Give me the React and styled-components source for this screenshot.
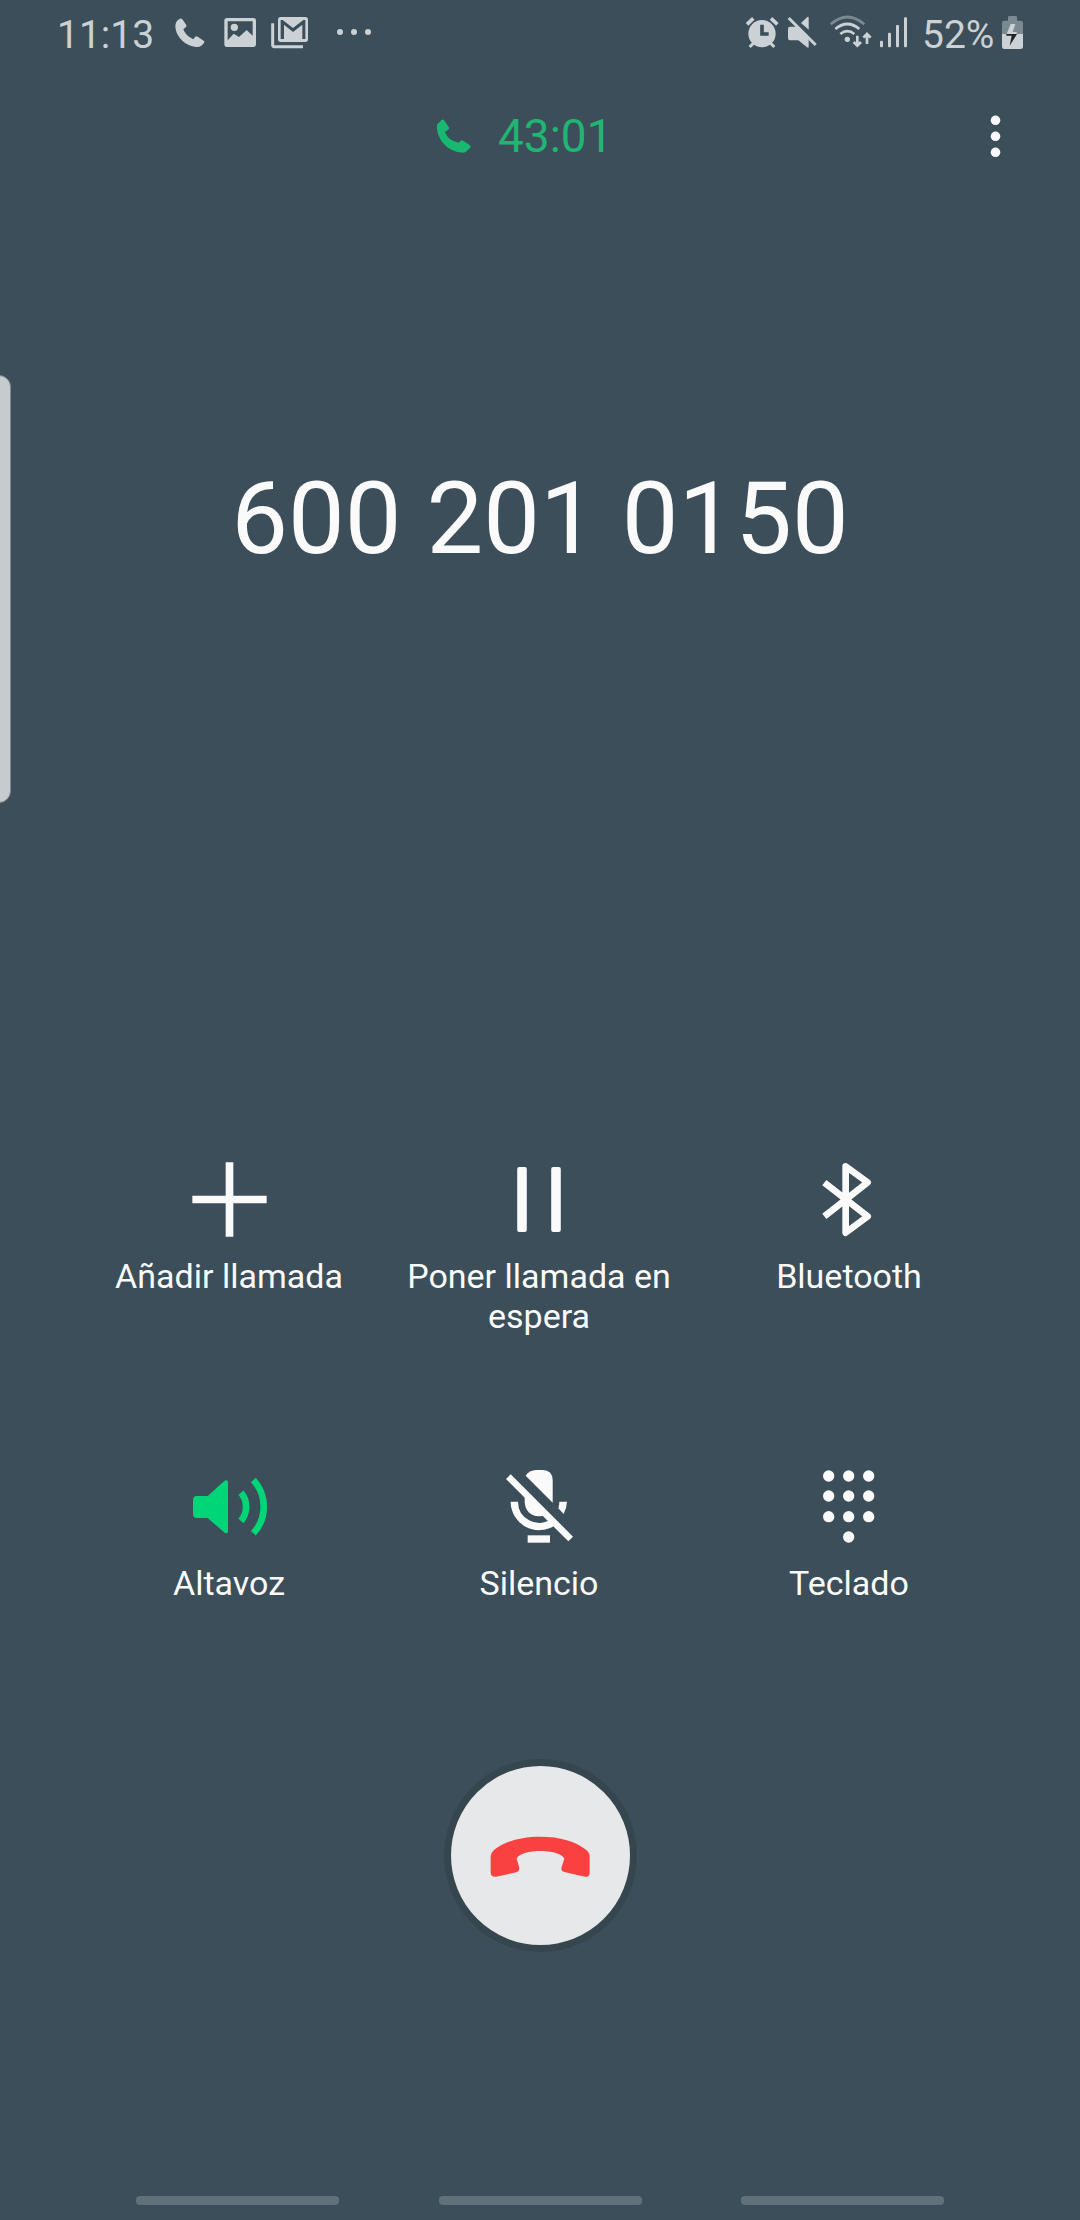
import React from 'react';
import styled, { createGlobalStyle } from 'styled-components';

const BG = '#3b4e59';
const STATUS = '#cbd1d5';
const DIM = '#7b8991';
const WHITE = '#fafafa';
const GREEN = '#00d678';

const PhoneStatusIcon = () => (
    <StatusIcon width="32" viewBox="402 42 96 108">
        <path d="M413 61 L420 56 Q425 54 428 59 L439 75 Q441 79 437 82 L430 88 Q437 108 460 118 L465 111 Q468 107 473 110 L491 122 Q495 125 492 129 L484 137 Q478 142 468 141 C430 137 405 104 406 76 Q406 66 413 61Z" />
    </StatusIcon>
);

const PictureIcon = () => (
    <StatusIcon width="36" viewBox="546 42 108 108">
        <path
            fillRule="evenodd"
            d="M561 54 H640 Q648 54 648 62 V133 Q648 141 640 141 H561 Q553 141 553 133 V62 Q553 54 561 54Z M563 64 V121 L581 101 L597 111 L620 90 L638 107 V64Z"
        />
        <circle cx="583" cy="82" r="11" />
    </StatusIcon>
);

const MailIcon = () => (
    <StatusIcon width="40" viewBox="690 42 120 108">
        <rect x="714" y="51" width="90" height="75" rx="8" />
        <path fill={BG} d="M722 117 V60 H728 L759 84 L790 60 H796 V117 H787 V74 L759 96 L732 74 V117Z" />
        <path fill="none" stroke={STATUS} strokeWidth="9" d="M698 70 V135 Q698 140 703 140 H789" />
    </StatusIcon>
);

const DotsIcon = () => (
    <StatusIcon width="40" viewBox="882 42 120 108">
        <circle cx="900" cy="96" r="9" />
        <circle cx="942" cy="96" r="9" />
        <circle cx="984" cy="96" r="9" />
    </StatusIcon>
);

const AlarmIcon = () => (
    <StatusIcon width="36" viewBox="42 42 108 108">
        <circle cx="96" cy="101" r="41" />
        <path fill="none" stroke={STATUS} strokeWidth="11" d="M51 73 L70 55 M123 55 L142 73" />
        <path fill="none" stroke={STATUS} strokeWidth="9" d="M59 141 L72 128 M120 128 L133 141" />
        <path fill="none" stroke={BG} strokeWidth="11" d="M96 74 V102 H116" />
    </StatusIcon>
);

const MutedIcon = () => (
    <StatusIcon width="32" viewBox="168 42 96 108">
        <path d="M213 69 L232 51 Q236 49 236 54 V89Z" />
        <path d="M180 80 H200 L236 116 V140 Q236 145 231 142 L205 121 H180 Q174 121 174 115 V86 Q174 80 180 80Z" />
        <path fill="none" stroke={STATUS} strokeWidth="9" d="M176 54 L257 135" />
    </StatusIcon>
);

const WifiIcon = () => (
    <StatusIcon width="44" viewBox="294 42 132 108">
        <circle cx="352" cy="118" r="8" />
        <g fill="none" stroke={STATUS} strokeWidth="8">
            <path stroke={DIM} d="M302 73 Q352 29 403 73" />
            <path d="M316 87 Q352 57 388 87" />
            <path d="M331 102 Q352 85 373 102" />
            <path strokeWidth="8" d="M382 107 V137 M371 126 L382 137 L393 126" />
            <path strokeWidth="8" d="M411 132 V102 M400 113 L411 102 L422 113" />
        </g>
    </StatusIcon>
);

const SignalIcon = () => (
    <StatusIcon width="30" viewBox="444 42 90 108">
        <rect x="450" y="122" width="9" height="20" rx="3" />
        <rect x="474" y="98" width="9" height="44" rx="3" />
        <rect x="498" y="75" width="9" height="67" rx="3" />
        <rect x="522" y="52" width="9" height="90" rx="3" />
    </StatusIcon>
);

const BatteryIcon = () => (
    <StatusIcon width="22" viewBox="816 42 66 108">
        <path fill={DIM} d="M834 62 V52 Q834 48 838 48 H857 Q861 48 861 52 V62 H873 Q879 62 879 69 V102 H816 V69 Q816 62 822 62Z" />
        <path d="M816 102 H879 V140 Q879 147 872 147 H823 Q816 147 816 140Z" />
        <path d="M842 72 H856 L848 96 H860 V102 H830Z" />
        <path fill="#1d2327" d="M829 102 H861 L839 137 L845 107 H829Z" />
    </StatusIcon>
);

const CallIcon = () => (
    <svg width="36" height="36" fill="#18b870">
        <path d="M5.6 2 Q7 .8 8 2 L13 9.6 Q13.5 11 12.2 11.8 L9 14 Q11.8 22.4 22.8 24.8 L24.6 22.8 Q25.6 22 26.8 22.6 L34 27.2 Q35 28 34.4 29.4 L30 33.8 Q28.4 35 26.5 34.8 C10 33 1 21 .9 8 Q.9 6.6 2 5.6Z" />
    </svg>
);

const AddIcon = () => (
    <ActionIcon viewBox="267 57 240 240">
        <path d="M377 67 H400 V167 H500 V190 H400 V290 H377 V190 H277 V167 H377Z" />
    </ActionIcon>
);

const HoldIcon = () => (
    <ActionIcon viewBox="0 0 80 80">
        <rect x="18.2" y="8" width="9.6" height="65" rx="2" />
        <rect x="52.2" y="8" width="9.6" height="65" rx="2" />
    </ActionIcon>
);

const BluetoothIcon = () => (
    <ActionIcon viewBox="807 57 240 240">
        <path
            fill="none"
            stroke={WHITE}
            strokeWidth="20"
            strokeLinejoin="round"
            d="M853 128 L983 229 L917 278 V79 L983 127 L853 229"
        />
    </ActionIcon>
);

const SpeakerIcon = () => (
    <ActionIcon viewBox="267 78 240 240" fill={GREEN}>
        <path d="M290 168 H323 L374 122 Q384 118 384 128 V273 Q384 283 374 278 L323 234 H290 Q279 234 279 223 V179 Q279 168 290 168Z" />
        <path fill="none" stroke={GREEN} strokeWidth="20" d="M423 158 A66 66 0 0 1 423 243 M460 120 A118 118 0 0 1 460 280" />
    </ActionIcon>
);

const MicOffIcon = () => (
    <ActionIcon viewBox="117 78 240 240">
        <path d="M197 107 Q208 91 228 90 H248 Q278 92 278 120 V188Z" />
        <path d="M194 158 V186 C195 212 213 229 236 229 Q244 229 249 227 L262 240 L275 232Z" />
        <path d="M298 185 H321 Q320 205 311 222 L295 205 Q298 196 298 185Z" />
        <rect x="203" y="286" width="67" height="22" />
        <path fill="none" stroke={WHITE} strokeWidth="22" d="M163 185 A74 74 0 0 0 278 247" />
        <path fill="none" stroke={WHITE} strokeWidth="20" d="M145 110 L332 297" />
    </ActionIcon>
);

const keys = [
    [206, 108], [266, 108], [326, 108],
    [206, 168], [266, 168], [326, 168],
    [206, 230], [266, 230], [326, 230],
    [266, 291],
];

const KeypadIcon = () => (
    <ActionIcon viewBox="147 78 240 240">
        {keys.map(([x, y]) => <circle key={`${x}-${y}`} cx={x} cy={y} r="17" />)}
    </ActionIcon>
);

const actions = [
    { label: 'Añadir llamada', Icon: AddIcon },
    { label: 'Poner llamada en espera', Icon: HoldIcon },
    { label: 'Bluetooth', Icon: BluetoothIcon },
    { label: 'Altavoz', Icon: SpeakerIcon },
    { label: 'Silencio', Icon: MicOffIcon },
    { label: 'Teclado', Icon: KeypadIcon },
];

const App = () => (
    <Screen>
        <GlobalStyle />
        <StatusBar>
            <Clock>11:13</Clock>
            <StatusGroup>
                <PhoneStatusIcon />
                <Space $size={16} />
                <PictureIcon />
                <Space $size={12} />
                <MailIcon />
                <Space $size={24} />
                <DotsIcon />
            </StatusGroup>
            <StatusGroup $right>
                <AlarmIcon />
                <Space $size={6} />
                <MutedIcon />
                <Space $size={10} />
                <WifiIcon />
                <Space $size={6} />
                <SignalIcon />
                <Percent>52%</Percent>
                <BatteryIcon />
            </StatusGroup>
        </StatusBar>

        <CallBar>
            <CallIcon />
            <Timer>43:01</Timer>
            <MoreButton aria-label="Más opciones">
                <svg width="24" height="48" fill={WHITE}>
                    <circle cx="11.5" cy="8.3" r="4.8" />
                    <circle cx="11.5" cy="24.3" r="4.8" />
                    <circle cx="11.5" cy="40.3" r="4.8" />
                </svg>
            </MoreButton>
        </CallBar>

        <PhoneNumber>600 201 0150</PhoneNumber>

        <Actions>
            {actions.map(({ label, Icon }) => (
                <Action key={label}>
                    <Icon />
                    <ActionLabel>{label}</ActionLabel>
                </Action>
            ))}
        </Actions>

        <HangUp aria-label="Finalizar">
            <svg width="110" height="44" viewBox="164 280 330 132" fill="#f94141">
                <path d="M181 347 Q182 336 191 328 C225 302 270 288 330 288 C390 288 435 302 468 328 Q478 336 478 347 V396 Q478 410 464 408 L402 394 Q392 391 393 382 L402 354 C395 338 360 331 330 331 C300 331 265 338 259 354 L267 382 Q268 391 258 395 L197 408 Q181 409 181 396Z" />
            </svg>
        </HangUp>

        <NavBar>
            <NavHandle />
            <NavHandle />
            <NavHandle />
        </NavBar>
        <EdgeHandle />
    </Screen>
);

export default App;

const GlobalStyle = createGlobalStyle`
    body {
        margin: 0;
        background: ${BG};
    }
`;

const Screen = styled.div`
    position: relative;
    display: flex;
    flex-direction: column;
    width: 1080px;
    height: 2220px;
    background: ${BG};
    color: ${WHITE};
    font-family: Roboto, 'Liberation Sans', sans-serif;
    overflow: hidden;
`;

const StatusBar = styled.div`
    display: flex;
    align-items: center;
    height: 64px;
    padding: 0 56px 0 57px;
    color: ${STATUS};
    font-size: 39px;
    line-height: 64px;
`;

const Clock = styled.div`
    width: 117px;
    padding-top: 6px;
`;

const StatusGroup = styled.div`
    display: flex;
    align-items: center;
    margin-left: ${(props) => (props.$right ? 'auto' : '0')};
`;

const StatusIcon = styled.svg`
    flex: none;
    height: 36px;
    fill: ${STATUS};
`;

const Space = styled.div`
    width: ${(props) => props.$size}px;
`;

const Percent = styled.div`
    width: 80px;
    padding: 6px 0 0 14px;
`;

const CallBar = styled.div`
    display: flex;
    align-items: center;
    height: 144px;
    padding: 0 72px 0 436px;
`;

const Timer = styled.div`
    margin-left: 26px;
    color: #20b573;
    font-size: 46px;
    line-height: 56px;
`;

const MoreButton = styled.button`
    display: flex;
    margin-left: auto;
    border: 0;
    padding: 0;
    background: none;
`;

const PhoneNumber = styled.div`
    margin-top: 251px;
    font-size: 101px;
    line-height: 120px;
    text-align: center;
`;

const Actions = styled.div`
    display: grid;
    grid-template-columns: repeat(3, 310px);
    grid-template-rows: 307px 260px;
    margin-top: 580px;
    padding-left: 74px;
`;

const Action = styled.div`
    display: flex;
    flex-direction: column;
    align-items: center;
    padding: 0 20px;
`;

const ActionIcon = styled.svg`
    width: 80px;
    height: 80px;
    fill: ${(props) => props.fill || WHITE};
`;

const ActionLabel = styled.div`
    margin-top: 17px;
    font-size: 34px;
    line-height: 40px;
    text-align: center;
`;

const HangUp = styled.button`
    display: flex;
    align-items: center;
    justify-content: center;
    box-sizing: border-box;
    align-self: center;
    width: 193px;
    height: 193px;
    margin-top: 33px;
    border: 7px solid #35464f;
    border-radius: 50%;
    padding: 0;
    background: #e6e8ea;
`;

const NavBar = styled.div`
    display: flex;
    justify-content: space-between;
    margin-top: auto;
    padding: 0 136px 15px;
`;

const NavHandle = styled.div`
    width: 203px;
    height: 9px;
    border-radius: 4px;
    background: #60717a;
`;

// edge panel handle, sits over the screen content
const EdgeHandle = styled.div`
    position: absolute;
    box-sizing: border-box;
    left: -4px;
    top: 375px;
    width: 15px;
    height: 428px;
    border: 1.5px solid #7f8b90;
    border-radius: 0 12px 12px 0;
    background: #c6cbcf;
`;
